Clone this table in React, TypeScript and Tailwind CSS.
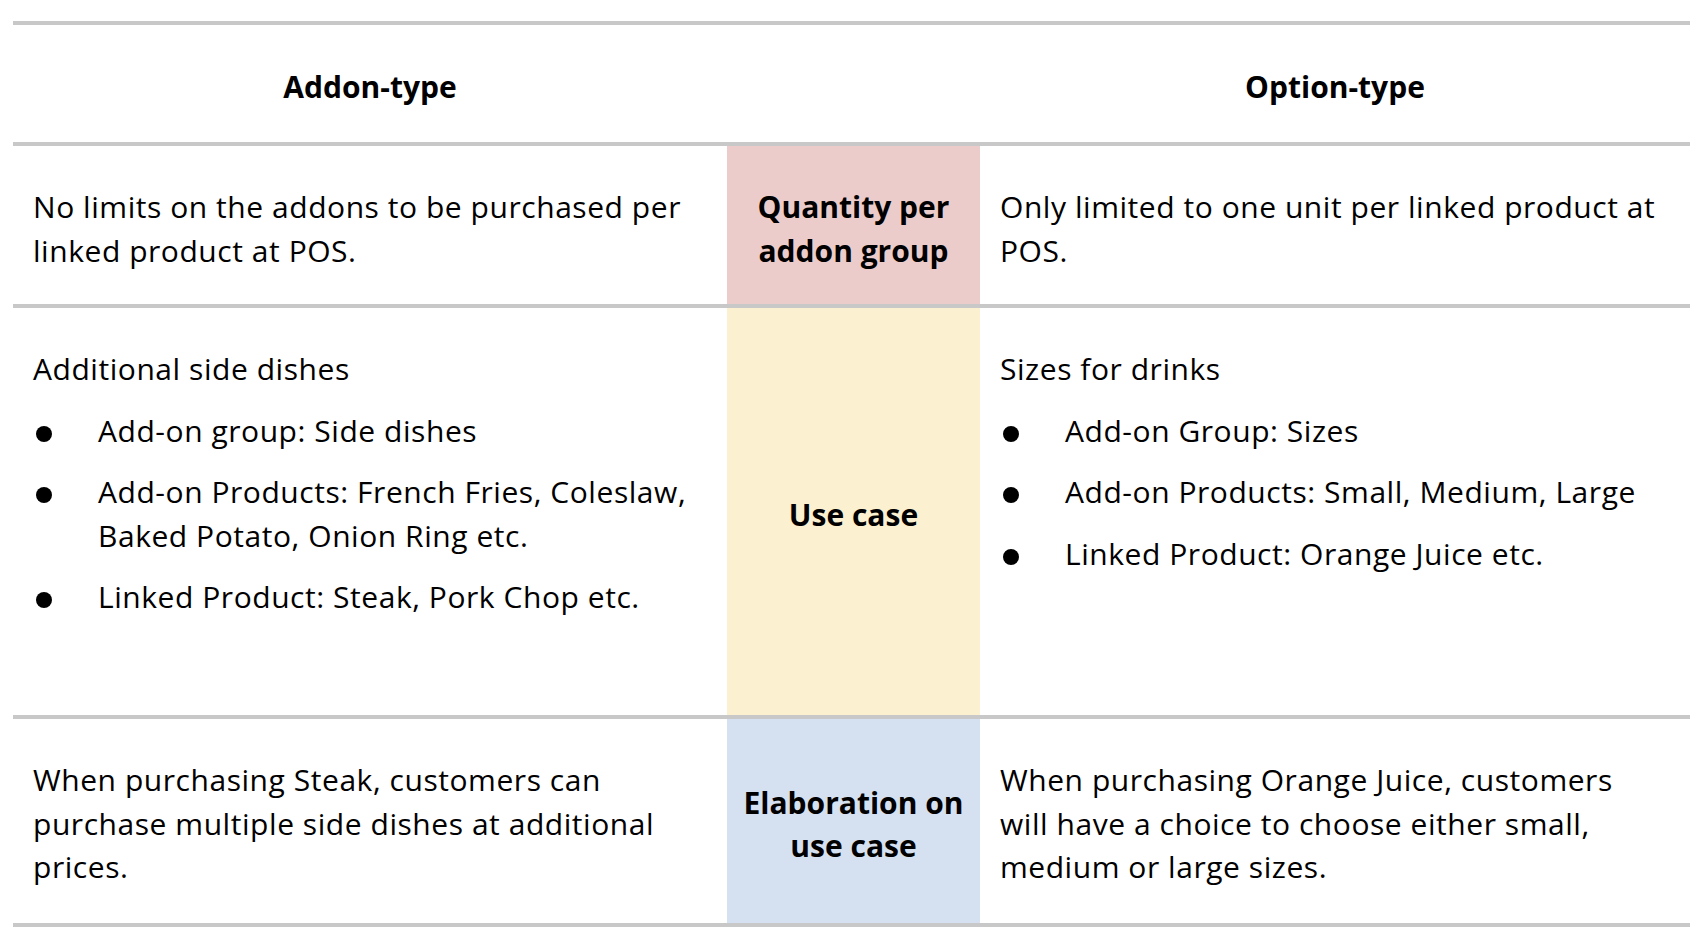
import React from "react";

const font = { fontFamily: "'Open Sans', Lato, sans-serif" };

function Bullet({ children }: { children: React.ReactNode }) {
  return (
    <div className="flex">
      <div className="w-[65px] shrink-0">
        <div className="ml-[3px] mt-[17px] h-[16px] w-[16px] rounded-full bg-black" />
      </div>
      <div className="whitespace-nowrap">{children}</div>
    </div>
  );
}

export default function App() {
  return (
    <div
      className="w-[1702px] h-[944px] bg-white text-black pt-[21px] pl-[13px] text-[30px] leading-[43.5px] tracking-[0.55px]"
      style={font}
    >
      <div className="w-[1677px] flex flex-col">
        {/* Header */}
        <div className="grid grid-cols-[714px_253px_710px] h-[121px] border-t-4 border-[#c8c8c8]">
          <div className="pt-[40px] text-center font-bold tracking-normal">Addon-type</div>
          <div />
          <div className="pt-[40px] text-center font-bold tracking-normal">Option-type</div>
        </div>

        {/* Row 1 */}
        <div className="grid grid-cols-[714px_253px_710px] h-[162px] border-t-4 border-[#c8c8c8]">
          <div className="pt-[39px] pl-[20px] whitespace-nowrap">
            No limits on the addons to be purchased per
            <br />
            linked product at POS.
          </div>
          <div className="bg-[#ecccca] pt-[39px] text-center font-bold tracking-normal whitespace-nowrap">
            Quantity per
            <br />
            addon group
          </div>
          <div className="pt-[39px] pl-[20px] whitespace-nowrap">
            Only limited to one unit per linked product at
            <br />
            POS.
          </div>
        </div>

        {/* Row 2 */}
        <div className="grid grid-cols-[714px_253px_710px] h-[411px] border-t-4 border-[#c8c8c8]">
          <div className="pt-[39px] pl-[20px] flex flex-col gap-[18px]">
            <div>Additional side dishes</div>
            <Bullet>Add-on group: Side dishes</Bullet>
            <Bullet>
              Add-on Products: French Fries, Coleslaw,
              <br />
              Baked Potato, Onion Ring etc.
            </Bullet>
            <Bullet>Linked Product: Steak, Pork Chop etc.</Bullet>
          </div>
          <div className="bg-[#fbf0cf] pt-[6px] flex items-center justify-center text-center font-bold tracking-normal">
            Use case
          </div>
          <div className="pt-[39px] pl-[20px] flex flex-col gap-[18px]">
            <div>Sizes for drinks</div>
            <Bullet>Add-on Group: Sizes</Bullet>
            <Bullet>Add-on Products: Small, Medium, Large</Bullet>
            <Bullet>Linked Product: Orange Juice etc.</Bullet>
          </div>
        </div>

        {/* Row 3 */}
        <div className="grid grid-cols-[714px_253px_710px] h-[212px] border-t-4 border-b-4 border-[#c8c8c8]">
          <div className="pt-[39px] pl-[20px] whitespace-nowrap">
            When purchasing Steak, customers can
            <br />
            purchase multiple side dishes at additional
            <br />
            prices.
          </div>
          <div className="bg-[#d5e1f0] pt-[6px] flex items-center justify-center text-center font-bold tracking-normal whitespace-nowrap">
            <div>
              Elaboration on
              <br />
              use case
            </div>
          </div>
          <div className="pt-[39px] pl-[20px] whitespace-nowrap">
            When purchasing Orange Juice, customers
            <br />
            will have a choice to choose either small,
            <br />
            medium or large sizes.
          </div>
        </div>
      </div>
    </div>
  );
}
